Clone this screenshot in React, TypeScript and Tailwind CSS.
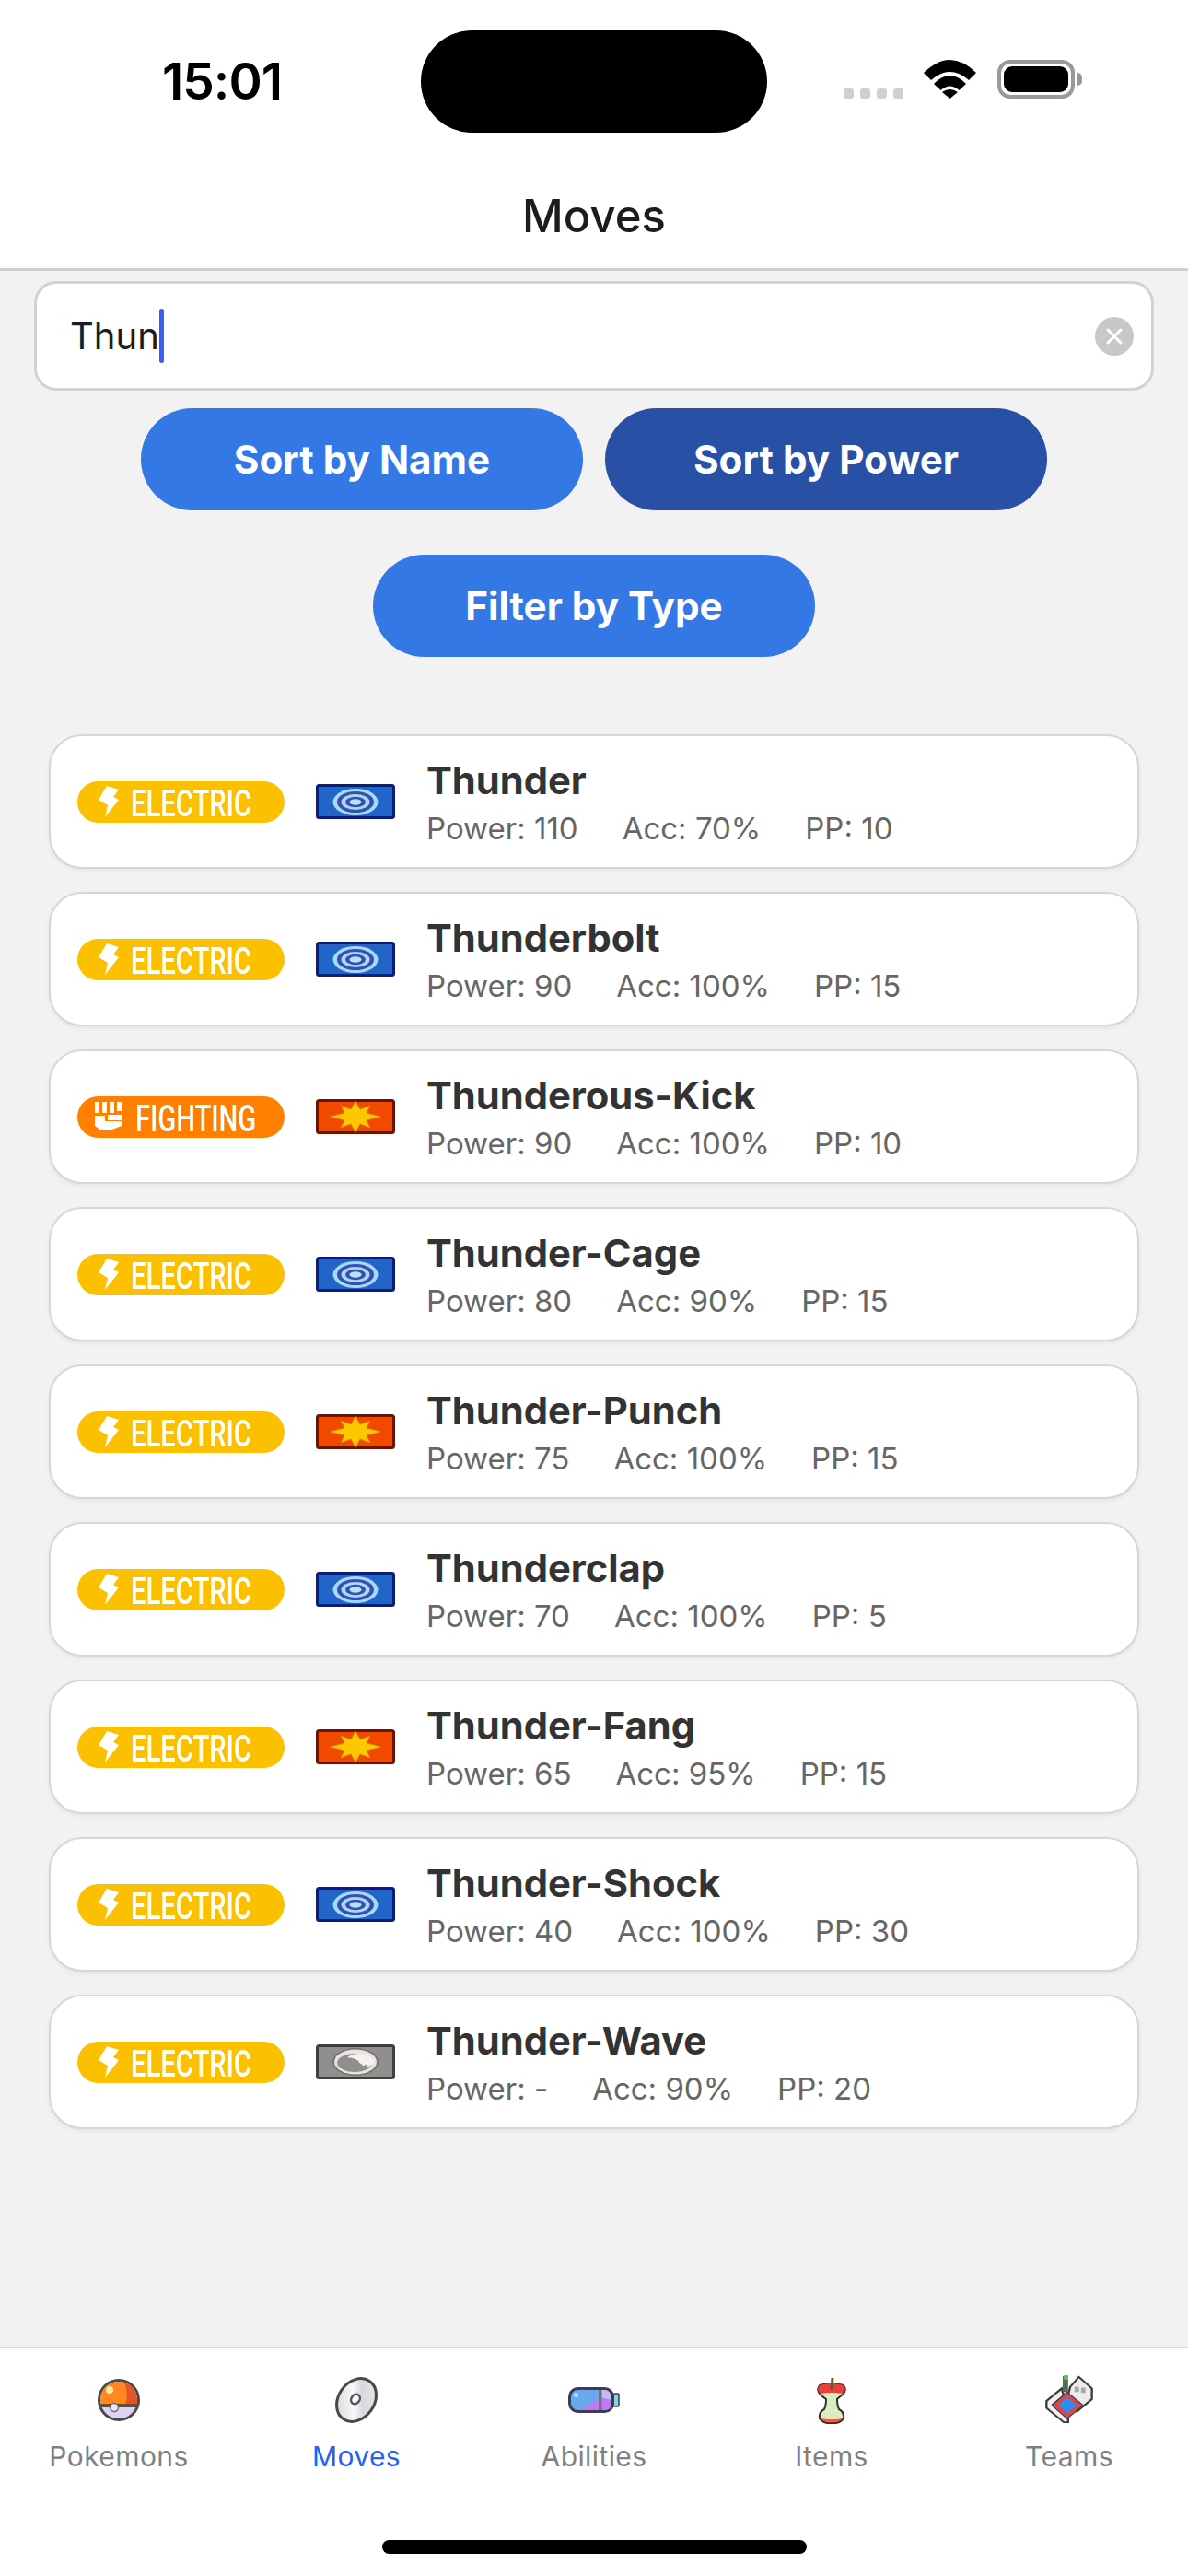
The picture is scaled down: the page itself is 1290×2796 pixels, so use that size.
import React from 'react';

type Move = {
  name: string;
  type: 'electric' | 'fighting';
  category: 'special' | 'physical' | 'status';
  power: string;
  acc: string;
  pp: number;
};

const moves: Move[] = [
  { name: 'Thunder', type: 'electric', category: 'special', power: '110', acc: '70%', pp: 10 },
  { name: 'Thunderbolt', type: 'electric', category: 'special', power: '90', acc: '100%', pp: 15 },
  { name: 'Thunderous-Kick', type: 'fighting', category: 'physical', power: '90', acc: '100%', pp: 10 },
  { name: 'Thunder-Cage', type: 'electric', category: 'special', power: '80', acc: '90%', pp: 15 },
  { name: 'Thunder-Punch', type: 'electric', category: 'physical', power: '75', acc: '100%', pp: 15 },
  { name: 'Thunderclap', type: 'electric', category: 'special', power: '70', acc: '100%', pp: 5 },
  { name: 'Thunder-Fang', type: 'electric', category: 'physical', power: '65', acc: '95%', pp: 15 },
  { name: 'Thunder-Shock', type: 'electric', category: 'special', power: '40', acc: '100%', pp: 30 },
  { name: 'Thunder-Wave', type: 'electric', category: 'status', power: '-', acc: '90%', pp: 20 },
];

const TypeBadge = ({ type }: { type: Move['type'] }) => {
  const electric = type === 'electric';
  return (
    <div className={`flex h-[45px] w-[225px] shrink-0 items-center rounded-full ${electric ? 'bg-[#fbc000] pl-[23px]' : 'bg-[#ff8000] pl-[19px]'}`}>
      {electric ? (
        <svg width="22" height="34" viewBox="0 0 22 34" className="shrink-0">
          <path d="M9 0 L22 4 L16 12 L22 15 L7 34 L10 21 L0 15 Z" fill="#fff" />
        </svg>
      ) : (
        <svg width="30" height="32" viewBox="0 0 30 32" className="shrink-0">
          <path d="M0 0h5v12H0zM8 0h5v12H8zM16 0h5v12h-5zM24 0h5v10h-5zM14 14h15v6H14z" fill="#fff" />
          <path d="M0 15h11v6h18v5l-13 5H7l-7-5z" fill="#fff" />
        </svg>
      )}
      <span className={`mt-[5px] origin-left scale-x-[0.73] whitespace-nowrap font-['Roboto',sans-serif] text-[40px] font-medium leading-none text-white ${electric ? 'ml-[13px]' : 'ml-[14px]'}`}>
        {electric ? 'ELECTRIC' : 'FIGHTING'}
      </span>
    </div>
  );
};

const CategoryIcon = ({ category }: { category: Move['category'] }) => {
  if (category === 'special') {
    return (
      <svg width="86" height="38" viewBox="0 0 86 38" className="shrink-0 blur-[0.4px]">
        <rect x="1.5" y="1.5" width="83" height="35" rx="2" fill="#2265c8" stroke="#0c1c78" strokeWidth="3" />
        <ellipse cx="43" cy="19.5" rx="24.5" ry="14.5" fill="#a4daf8" />
        <ellipse cx="43" cy="19.5" rx="20" ry="11.5" fill="#3a4fac" />
        <ellipse cx="43" cy="19.5" rx="15.5" ry="8.5" fill="#a4daf8" />
        <ellipse cx="43" cy="19.5" rx="11" ry="5.8" fill="#3a4fac" />
        <ellipse cx="43" cy="19.5" rx="6.5" ry="3.2" fill="#b6e2f9" />
      </svg>
    );
  }
  if (category === 'physical') {
    return (
      <svg width="86" height="38" viewBox="0 0 86 38" className="shrink-0 blur-[0.4px]">
        <rect x="1.5" y="1.5" width="83" height="35" rx="2" fill="#f14a00" stroke="#6a1408" strokeWidth="3" />
        <polygon
          points="43,2 48,11 59,7 55,15 71,19 55,23 59,31 48,27 43,36 38,27 27,31 31,23 15,19 31,15 27,7 38,11"
          fill="#fcc800"
          stroke="#d88000"
          strokeWidth="0.8"
        />
      </svg>
    );
  }
  return (
    <svg width="86" height="38" viewBox="0 0 86 38" className="shrink-0 blur-[0.4px]">
      <rect x="1.5" y="1.5" width="83" height="35" rx="2" fill="#8f8f8f" stroke="#3f4238" strokeWidth="3" />
      <ellipse cx="43" cy="19" rx="25" ry="15" fill="#7c6f6c" />
      <ellipse cx="43" cy="19" rx="23" ry="13.5" fill="#e8e4e0" />
      <ellipse cx="42" cy="20" rx="19" ry="10" fill="#8f8f8f" />
      <path d="M34 14 C44 7 58 10 64 18 C60 26 50 26 48 21 C46 16 41 15 34 14 Z" fill="#f4f2f0" />
      <path d="M48 21 C50 25 53 25 55 22" stroke="#8f8f8f" strokeWidth="2" fill="none" />
    </svg>
  );
};

const MoveCard = ({ move }: { move: Move }) => (
  <div className="flex h-[146px] items-center rounded-[36px] border-2 border-[#d4d7de] bg-white pl-[29px] shadow-[0_2px_5px_rgba(0,0,0,0.06)]">
    <TypeBadge type={move.type} />
    <div className="ml-[34px]">
      <CategoryIcon category={move.category} />
    </div>
    <div className="ml-[34px] flex flex-col">
      <div className="text-[41.7px] font-bold leading-[50px] text-[#333333]">{move.name}</div>
      <div className="mt-[7px] flex gap-[48px] text-[33px] leading-[40px] text-[#666666]">
        <span>Power: {move.power}</span>
        <span>Acc: {move.acc}</span>
        <span>PP: {move.pp}</span>
      </div>
    </div>
  </div>
);

const PokeballIcon = () => (
  <svg width="46" height="46" viewBox="0 0 46 46" className="blur-[0.4px]">
    <circle cx="23" cy="23" r="21.5" fill="#dcd4f0" stroke="#4a4a4a" strokeWidth="3" />
    <path d="M3 28 V23 A20 20 0 0 1 43 23 V28 Z" fill="#ff8820" />
    <path d="M29 4 A20 20 0 0 1 43 23 V28 H30 Q34 16 29 4 Z" fill="#e0562a" />
    <rect x="2" y="27" width="42" height="4" fill="#4f5354" />
    <circle cx="13" cy="12" r="4" fill="#ffe9a0" />
    <circle cx="18" cy="31" r="4.5" fill="#e9e9f4" stroke="#6a6a7c" strokeWidth="1.5" />
  </svg>
);

const DiscIcon = () => (
  <svg width="52" height="52" viewBox="0 0 52 52" className="blur-[0.4px]">
    <defs>
      <linearGradient id="discShine" x1="0" y1="1" x2="1" y2="0">
        <stop offset="0" stopColor="#cfcfd3" />
        <stop offset="0.45" stopColor="#f8f8fa" />
        <stop offset="0.6" stopColor="#d8d8dc" />
        <stop offset="1" stopColor="#f0f0f3" />
      </linearGradient>
    </defs>
    <ellipse cx="26" cy="26" rx="19.5" ry="25" transform="rotate(35 26 26)" fill="url(#discShine)" stroke="#47474c" strokeWidth="3" />
    <ellipse cx="25" cy="25" rx="4.5" ry="5.5" transform="rotate(35 25 25)" fill="#fff" stroke="#55555a" strokeWidth="2.5" />
  </svg>
);

const CapsuleIcon = () => (
  <svg width="56" height="28" viewBox="0 0 56 28" className="blur-[0.4px]">
    <rect x="49" y="7" width="6" height="14" rx="1" fill="#7ed6e6" stroke="#3c3c50" strokeWidth="1.5" />
    <rect x="1.5" y="1.5" width="47" height="25" rx="9" fill="#6aa8ee" stroke="#3c3c50" strokeWidth="3" />
    <path d="M14 25 L34 12 L47 14 V17 Q47 25 40 25 Z" fill="#c278f5" />
    <path d="M35 3 H40 Q47 4 47 14 L35 11 Z" fill="#c9b8f4" />
    <rect x="33" y="3" width="3.5" height="22" fill="#70708e" />
    <rect x="6" y="6" width="5" height="5" rx="2" fill="#a9e4fa" />
  </svg>
);

const AppleIcon = () => (
  <svg width="32" height="51" viewBox="0 0 32 51" className="blur-[0.4px]">
    <path d="M3 9 Q16 5 29 9 Q33 14 28 19 Q24 22 22 24 Q22 31 24 35 Q30 38 29 45 Q24 51 16 50 Q8 51 3 45 Q2 38 8 35 Q10 31 10 24 Q7 22 4 19 Q-1 14 3 9 Z" fill="#d7eec0" stroke="#3a2a28" strokeWidth="2" />
    <path d="M3 9 Q16 5 29 9 Q33 14 28 18 Q16 16 4 18 Q-1 14 3 9 Z" fill="#e8403c" />
    <path d="M3 43 Q5 46 12 46 H20 Q27 46 29 43 Q26 50 16 49 Q6 50 3 43 Z" fill="#ec5a48" />
    <path d="M17 1 L16 14" stroke="#6c5a10" strokeWidth="3" />
  </svg>
);

const TeamsIcon = () => (
  <svg width="54" height="56" viewBox="0 0 46 58" preserveAspectRatio="none" className="blur-[0.4px]">
    <path d="M24 14 L32 3 L44 16 V28 L30 42 L20 32 Z" fill="#ececec" stroke="#3c3c3c" strokeWidth="2" />
    <rect x="28" y="14" width="4" height="6" fill="#a8a8a8" />
    <rect x="34" y="15" width="4" height="6" fill="#a8a8a8" />
    <path d="M16 16 L2 30 V38 L18 54 H22 V48 L8 34 L18 24 Z" fill="#f2f2f2" stroke="#3c3c3c" strokeWidth="2" />
    <rect x="17" y="2" width="5" height="18" fill="#5a6a5a" />
    <rect x="18" y="1" width="4" height="5" fill="#5cc85c" />
    <path d="M21 20 L36 35 L21 50 L7 35 Z" fill="#d94848" stroke="#3c3c3c" strokeWidth="1" />
    <path d="M21 26 L30 35 L21 44 L13 35 Z" fill="#2f8df0" />
  </svg>
);

const tabs = [
  { label: 'Pokemons', icon: <PokeballIcon /> },
  { label: 'Moves', icon: <DiscIcon />, active: true },
  { label: 'Abilities', icon: <CapsuleIcon /> },
  { label: 'Items', icon: <AppleIcon /> },
  { label: 'Teams', icon: <TeamsIcon /> },
];

export default function App() {
  return (
    <div className="flex h-[2796px] w-[1290px] flex-col overflow-hidden bg-[#f2f2f2] font-['Inter',sans-serif]">
      {/* Status bar + header */}
      <div className="h-[294px] shrink-0 border-b-[3px] border-[#cfcfcf] bg-white">
        <div className="flex h-[204px] items-start">
          <div className="ml-[176px] mt-[58px] w-[140px] text-[55px] font-semibold leading-[60px] tracking-[-1px] text-black">15:01</div>
          <div className="ml-[141px] mt-[33px] h-[111px] w-[376px] rounded-full bg-black" />
          <div className="ml-[83px] mt-[96px] flex gap-[7px]">
            {[0, 1, 2, 3].map(i => (
              <div key={i} className="h-[11px] w-[11px] rounded-[3px] bg-[#d0d0d0]" />
            ))}
          </div>
          <svg width="57" height="42" viewBox="0 0 57 42" className="ml-[22px] mt-[65px]">
            <path d="M0 14 Q28.5 -14 57 14 L49 22 Q28.5 4 8 22 Z" fill="#000" />
            <path d="M11 26 Q28.5 8 46 26 L38.5 33 Q28.5 24 18.5 33 Z" fill="#000" />
            <path d="M20 35 Q28.5 29 37 35 L28.5 42 Z" fill="#000" />
          </svg>
          <div className="ml-[23px] mt-[65px] flex items-center">
            <div className="flex h-[42px] w-[84px] rounded-[14px] border-4 border-[#999999] p-[3px]">
              <div className="h-full w-full rounded-[9px] bg-black" />
            </div>
            <div className="ml-[3px] h-[14px] w-[5px] rounded-r-full bg-[#999999]" />
          </div>
        </div>
        <div className="text-center text-[49px] font-medium leading-[62px] text-[#1c1c1e]">Moves</div>
      </div>

      {/* Search + controls */}
      <div className="flex-1 overflow-hidden">
        <div className="mx-[37px] mt-[11px] flex h-[119px] items-center rounded-[24px] border-[3px] border-[#d2d2d2] bg-white pl-[36px] pr-[19px]">
          <span className="text-[40px] leading-none text-[#1c1c1e]">Thun</span>
          <div className="h-[59px] w-[5px] rounded-full bg-[#3a5ef0]" />
          <div className="ml-auto flex h-[42px] w-[42px] items-center justify-center rounded-full bg-[#c8c8c8]">
            <svg width="20" height="20" viewBox="0 0 20 20">
              <path d="M3 3 L17 17 M17 3 L3 17" stroke="#fff" strokeWidth="3" strokeLinecap="round" />
            </svg>
          </div>
        </div>

        <div className="mt-[19px] flex justify-center gap-[24px]">
          <button className="h-[111px] w-[480px] rounded-full bg-[#3478e6] text-[42.2px] font-bold text-white">Sort by Name</button>
          <button className="h-[111px] w-[480px] rounded-full bg-[#2850a5] text-[42.2px] font-bold text-white">Sort by Power</button>
        </div>
        <div className="mt-[48px] flex justify-center">
          <button className="h-[111px] w-[480px] rounded-full bg-[#3478e6] text-[42.2px] font-bold text-white">Filter by Type</button>
        </div>

        {/* Move list */}
        <div className="mx-[53px] mt-[84px] flex flex-col gap-[25px]">
          {moves.map(move => (
            <MoveCard key={move.name} move={move} />
          ))}
        </div>
      </div>

      {/* Tab bar */}
      <div className="relative h-[249px] shrink-0 border-t-2 border-[#d8d8d8] bg-white">
        <div className="flex pt-[11px]">
          {tabs.map(tab => (
            <div key={tab.label} className="flex w-[258px] flex-col items-center">
              <div className="flex h-[90px] items-center justify-center">{tab.icon}</div>
              <div className={`text-[30px] font-normal leading-[32px] tracking-[0.4px] ${tab.active ? 'text-[#2563eb]' : 'text-[#808080]'}`}>{tab.label}</div>
            </div>
          ))}
        </div>
        <div className="absolute bottom-[24px] left-[415px] h-[15px] w-[461px] rounded-full bg-black" />
      </div>
    </div>
  );
}
